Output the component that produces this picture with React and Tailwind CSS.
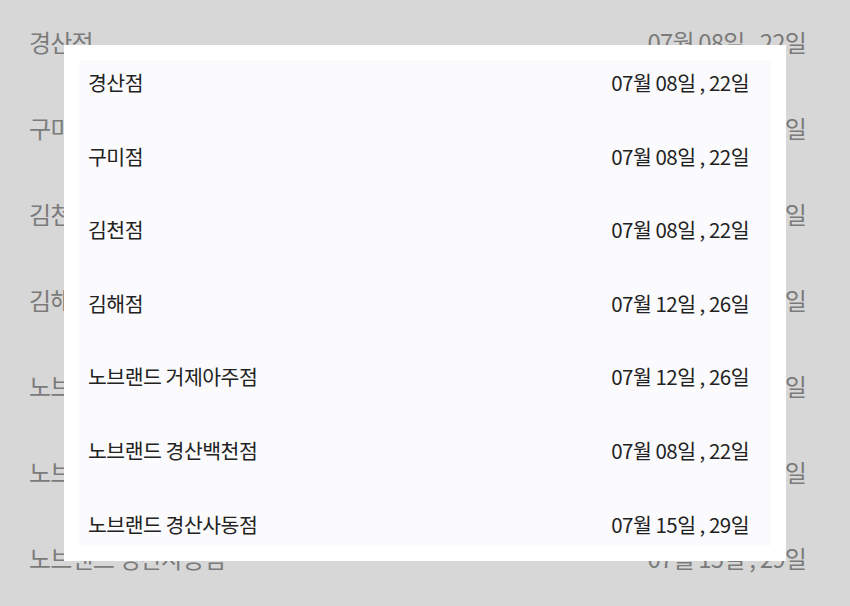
const stores = [
  { name: "경산점", date: "07월 08일 , 22일" },
  { name: "구미점", date: "07월 08일 , 22일" },
  { name: "김천점", date: "07월 08일 , 22일" },
  { name: "김해점", date: "07월 12일 , 26일" },
  { name: "노브랜드 거제아주점", date: "07월 12일 , 26일" },
  { name: "노브랜드 경산백천점", date: "07월 08일 , 22일" },
  { name: "노브랜드 경산사동점", date: "07월 15일 , 29일" },
];

const font = { fontFamily: '"Noto Sans CJK KR", "Noto Sans", sans-serif' };

const App = () => {
  return (
    <div className="relative w-[850px] h-[606px] overflow-hidden bg-[#d7d7d7]" style={font}>
      {/* dimmed page behind the modal */}
      <ul className="flex flex-col gap-[56px] pt-[27px] pl-[29px] pr-[44px]">
        {stores.map((s) => (
          <li
            key={s.name}
            className="flex items-center justify-between h-[30px] text-[24px] leading-[30px] tracking-[-0.8px] text-[#7b7b7b]"
          >
            <span>{s.name}</span>
            <span>{s.date}</span>
          </li>
        ))}
      </ul>

      {/* modal */}
      <div className="absolute left-[64px] top-[45px] w-[722px] h-[516px] bg-white p-[15px]">
        <ul className="flex flex-col gap-[49.6px] h-full bg-[#fbfbfd] pt-[10px] pl-[9px] pr-[22px]">
          {stores.map((s) => (
            <li
              key={s.name}
              className="flex items-center justify-between h-[24px] text-[20.5px] leading-[24px] tracking-[-0.5px] text-[#222]"
            >
              <span>{s.name}</span>
              <span>{s.date}</span>
            </li>
          ))}
        </ul>
      </div>
    </div>
  );
};

export default App;
